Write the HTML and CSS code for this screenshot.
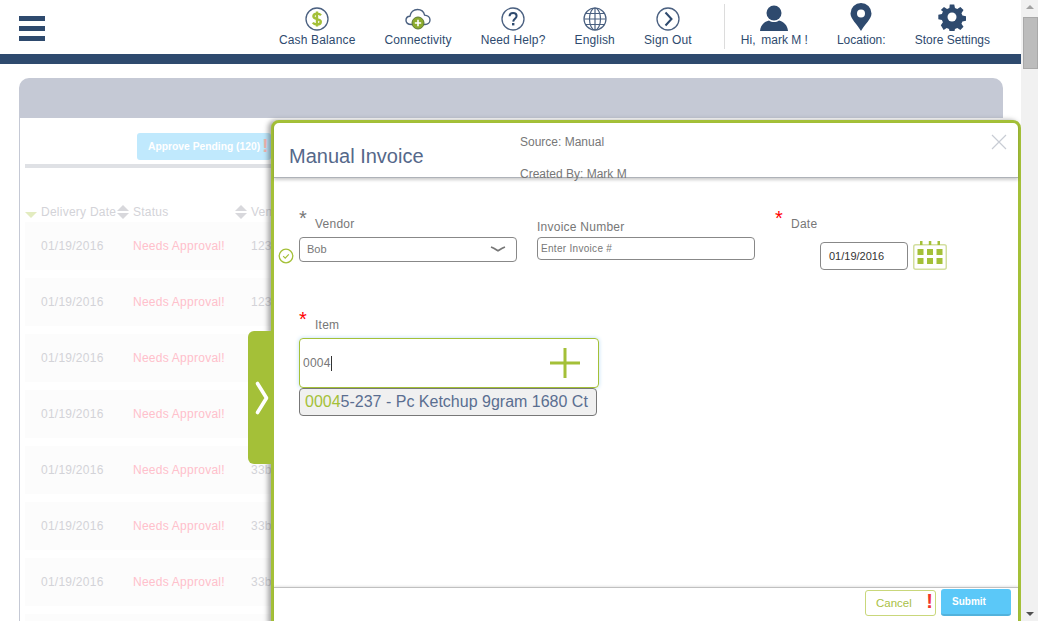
FILE: index.html
```html
<!DOCTYPE html>
<html>
<head>
    <meta charset="UTF-8">
    <title>Manual Invoice</title>
    <link rel="stylesheet" href="styles.css">
</head>
<body>
<div class="page">
    <div class="main">
        <div class="header">
            <div class="burger"><i></i><i></i><i></i></div>
            <div class="nav">
                <div class="nav-group">
                    <div class="nav-item">
                        <svg width="24" height="24" viewBox="0 0 24 24"><circle cx="12" cy="12" r="11" fill="#fff" stroke="#4a6080" stroke-width="1.3"/><path d="M16 8.2C15 7 13.6 6.6 12 6.6c-2 0-3.6 1-3.6 2.7 0 3.7 7.4 1.8 7.4 5.4 0 1.8-1.7 2.8-3.8 2.8-1.8 0-3.3-.6-4.2-1.9M12 4.500v15" fill="none" stroke="#a4c038" stroke-width="2.4"/></svg>
                        <span>Cash Balance</span>
                    </div>
                    <div class="nav-item">
                        <svg width="26" height="24" viewBox="0 0 26 24"><path d="M6.500 17.500C3 17.500 1 15.600 1 13.200c0-2.300 1.800-3.900 4-4C5.600 5.200 8.700 2.500 12.500 2.500c3.500 0 6.300 2.300 7.100 5.600 3 .2 5.400 2.200 5.400 4.900 0 2.500-2.200 4.500-5 4.500z" fill="#fff" stroke="#4a6080" stroke-width="1.400"/><circle cx="13" cy="16" r="6" fill="#8cab2e" stroke="#5b7a33"/><path d="M13 12.800v6.400M9.800 16h6.400" stroke="#fff" stroke-width="1.600"/></svg>
                        <span>Connectivity</span>
                    </div>
                    <div class="nav-item">
                        <svg width="24" height="24" viewBox="0 0 24 24"><circle cx="12" cy="12" r="11" fill="#fff" stroke="#4a6080" stroke-width="1.300"/><path d="M8.500 9.300C8.600 7.200 10 6 12.100 6c2.100 0 3.500 1.200 3.500 3 0 2.600-3.300 2.900-3.400 5.600" fill="none" stroke="#2e4a6e" stroke-width="2"/><rect x="11" y="16" width="2.400" height="2.400" fill="#2e4a6e"/></svg>
                        <span>Need Help?</span>
                    </div>
                    <div class="nav-item">
                        <svg width="24" height="24" viewBox="0 0 24 24" fill="none" stroke="#4a6080" stroke-width="1.200"><circle cx="12" cy="12" r="11"/><ellipse cx="12" cy="12" rx="5.500" ry="11"/><path d="M12 1v22M1 12h22M2.600 6.500h18.800M2.600 17.500h18.800"/></svg>
                        <span>English</span>
                    </div>
                    <div class="nav-item">
                        <svg width="24" height="24" viewBox="0 0 24 24" fill="none"><circle cx="12" cy="12" r="11" stroke="#4a6080" stroke-width="1.300"/><path d="M9.500 5.500L15.500 12l-6 6.500" stroke="#2e4a6e" stroke-width="2"/></svg>
                        <span>Sign Out</span>
                    </div>
                </div>
                <div class="nav-sep"></div>
                <div class="nav-group user">
                    <div class="nav-item">
                        <svg width="28" height="26" viewBox="0 0 28 26" fill="#2e4a6e"><circle cx="14" cy="8" r="7.500"/><path d="M0 26c.5-6 4.500-9.500 9-10.500 1.500 1 3 1.500 5 1.500s3.500-.5 5-1.500c4.500 1 8.500 4.500 9 10.500z"/></svg>
                        <span>Hi,&nbsp;&#8201;mark M !</span>
                    </div>
                    <div class="nav-item">
                        <svg width="22" height="28" viewBox="0 0 22 28"><path d="M11 28C7 21 .5 16 .5 10.500a10.500 10.500 0 0 1 21 0C21.500 16 15 21 11 28z" fill="#2e4a6e"/><circle cx="11" cy="10.500" r="4" fill="#fff"/></svg>
                        <span>Location:</span>
                    </div>
                    <div class="nav-item">
                        <svg width="28" height="28" viewBox="0 0 28 28"><path d="M11.500 0h5l.8 4 2.600 1.100 3.400-2.300 3.500 3.500-2.300 3.400 1.100 2.600 4 .8v5l-4 .8-1.100 2.600 2.300 3.400-3.500 3.500-3.400-2.300-2.600 1.100-.8 4h-5l-.8-4-2.600-1.100-3.400 2.300L1.600 23.200l2.300-3.400-1.100-2.600-4-.8v-5l4-.8 1.100-2.600L1.600 6.300l3.500-3.500 3.400 2.300 2.600-1.100z" fill="#2e4a6e" transform="translate(1.400 1.400) scale(.9)"/><circle cx="14" cy="14" r="4.500" fill="#fff"/></svg>
                        <span>Store Settings</span>
                    </div>
                </div>
            </div>
        </div>
        <div class="blue-bar"></div>

        <div class="content">
            <div class="panel">
                <div class="panel-head"></div>
                <div class="panel-body">
                    <div class="toolbar">
                        <div class="approve-btn">Approve Pending (120)<b>!</b></div>
                    </div>
                    <div class="toolbar-line"></div>
                    <div class="grid-head">
                        <div class="cell-date"><i class="sort-down"></i>Delivery Date<i class="sort-both"></i></div>
                        <div class="cell-status">Status<i class="sort-both"></i></div>
                        <div>Vendor</div>
                    </div>
                    <div class="grid-row"><div>01/19/2016</div><div class="needs">Needs Approval!</div><div>1234</div></div>
                    <div class="grid-row"><div>01/19/2016</div><div class="needs">Needs Approval!</div><div>1234</div></div>
                    <div class="grid-row"><div>01/19/2016</div><div class="needs">Needs Approval!</div><div>1234</div></div>
                    <div class="grid-row"><div>01/19/2016</div><div class="needs">Needs Approval!</div><div>1234</div></div>
                    <div class="grid-row"><div>01/19/2016</div><div class="needs">Needs Approval!</div><div>33b</div></div>
                    <div class="grid-row"><div>01/19/2016</div><div class="needs">Needs Approval!</div><div>33b</div></div>
                    <div class="grid-row"><div>01/19/2016</div><div class="needs">Needs Approval!</div><div>33b</div></div>
                    <div class="grid-row"></div>
                </div>
            </div>

            <div class="modal">
                <div class="modal-tab">
                    <svg width="14" height="34" viewBox="0 0 14 34" fill="none"><path d="M2.500 2.500l9 14.500-9 14.500" stroke="#fff" stroke-width="3.600" stroke-linecap="round" stroke-linejoin="round"/></svg>
                </div>
                <div class="modal-head">
                    <div class="modal-title">Manual Invoice</div>
                    <div class="modal-meta">
                        <div>Source: Manual</div>
                        <div>Created By: Mark M</div>
                    </div>
                    <svg class="modal-close" width="16" height="16" viewBox="0 0 16 16" fill="none"><path d="M1 1l14 14M15 1L1 15" stroke="#c8ccd4" stroke-width="1.200"/></svg>
                </div>
                <div class="modal-body">
                    <div class="form-top">
                        <div class="field">
                            <div class="field-label"><span class="star grey">*</span><span>Vendor</span></div>
                            <svg class="valid-icon" width="16" height="16" viewBox="0 0 16 16" fill="none"><circle cx="8" cy="8" r="6.800" stroke="#a4c038" stroke-width="1.300"/><path d="M5.200 8.200l2 2 3.600-3.800" stroke="#a4c038" stroke-width="1.200"/></svg>
                            <div class="select-box">Bob
                                <svg width="16" height="6" viewBox="0 0 16 6" fill="none"><path d="M1 1c3 1 5 2.500 7 3.800C10 3.500 12 2 15 1" stroke="#777" stroke-width="1.800"/></svg>
                            </div>
                        </div>
                        <div class="field invoice">
                            <div class="field-label"><span>Invoice Number</span></div>
                            <div class="text-box">Enter Invoice #</div>
                        </div>
                        <div class="field date">
                            <div class="field-label"><span class="star">*</span><span>Date</span></div>
                            <div class="date-line">
                                <div class="date-box">01/19/2016</div>
                                <svg width="34" height="29" viewBox="0 0 34 29"><rect x=".75" y="3.750" width="32.500" height="24.500" rx="2" fill="#fff" stroke="#d3dfa0" stroke-width="1.500"/><path d="M7 0h2.500v4H7zM15.800 0h2.500v4h-2.500zM24.500 0H27v4h-2.500zM4.500 8h6v6h-6zM14 8h6v6h-6zM23.500 8h6v6h-6zM4.500 17h6v6h-6zM14 17h6v6h-6zM23.500 17h6v6h-6z" fill="#a4c038"/></svg>
                            </div>
                        </div>
                    </div>
                    <div class="field item">
                        <div class="field-label"><span class="star">*</span><span>Item</span></div>
                        <div class="item-box">
                            <span class="item-text">0004</span><i class="caret"></i>
                            <svg width="30" height="30" viewBox="0 0 30 30"><path d="M15 0v30M0 15h30" stroke="#a4c038" stroke-width="3"/></svg>
                        </div>
                        <div class="suggest"><em>0004</em>5-237 - Pc Ketchup 9gram 1680 Ct</div>
                    </div>
                </div>
                <div class="modal-foot">
                    <div class="cancel-btn">Cancel<b>!</b></div>
                    <div class="submit-btn">Submit</div>
                </div>
            </div>
        </div>
    </div>

    <div class="scrollbar">
        <i class="arrow-up"></i>
        <div class="thumb"></div>
        <i class="arrow-down"></i>
    </div>
</div>
</body>
</html>
```
FILE: styles.css
```css
html,body{ margin: 0; padding: 0; height: 100%; overflow: hidden; background: #fff; font-family: "Liberation Sans", Arial, sans-serif; font-size: 12px; }

.page{ display: flex; height: 621px; overflow: hidden; }
.main{ width: 1021px; display: flex; flex-direction: column; }

/* top bar */
.header{ height: 54px; display: flex; justify-content: space-between; flex-shrink: 0; }
.burger{ display: flex; flex-direction: column; gap: 5px; width: 26px; margin: 16px 0 0 19px; }
.burger i{ display: block; height: 5px; background: #2e4a6e; }
.nav{ display: flex; padding-right: 31px; }
.nav-group{ display: flex; gap: 29px; letter-spacing: .15px; }
.nav-group.user{ letter-spacing: 0; }
.nav-item{ display: flex; flex-direction: column; align-items: center; justify-content: flex-end; height: 47px; color: #2e4a6e; white-space: nowrap; line-height: 14px; }
.nav-item svg{ margin-bottom: 2px; }
.nav-sep{ width: 1px; height: 45px; margin: 4px 16px 0 32px; background: #dcdcdc; }
.blue-bar{ height: 10px; background: #2e4a6e; flex-shrink: 0; }

/* faded list behind the dialog */
.content{ position: relative; flex: 1; padding: 14px 18px 0 19px; }
.panel{ height: 100%; display: flex; flex-direction: column; }
.panel-head{ height: 40px; flex-shrink: 0; background: #c5c9d5; border-radius: 10px 10px 0 0; }
.panel-body{ flex: 1; padding: 15px 0 0 5px; border-left: 1px solid #c5c9d5; color: #d3d3d8; letter-spacing: .25px; }
.toolbar{ padding-left: 112px; }
.approve-btn{ display: flex; align-items: center; height: 27px; width: 134px; padding-left: 11px; box-sizing: border-box; background: #c0e9fd; border-radius: 3px; color: #fff; font-size: 10.300px; font-weight: bold; letter-spacing: 0; white-space: nowrap; }
.approve-btn b{ margin-left: 2px; font-size: 18px; color: #f3b5ae; }
.toolbar-line{ height: 4px; margin-top: 4px; background: #dfe1e5; }
.grid-head,.grid-row{ display: grid; grid-template-columns: 108px 118px 1fr; }
.grid-head{ margin-top: 36px; height: 16px; line-height: 16px; }
.grid-head > div{ position: relative; display: flex; align-items: center; }
.cell-date{ padding-left: 16px; }
.sort-down{ position: absolute; left: 0; top: 8px; border: 6px solid transparent; border-top: 6px solid #e3ecc0; border-bottom: 0; }
.sort-both{ position: absolute; top: 1px; width: 12px; height: 14px; }
.sort-both:before,.sort-both:after{ content: ""; position: absolute; left: 0; border: 6px solid transparent; }
.sort-both:before{ top: 0; border-top: 0; border-bottom: 6px solid #d8d8dc; }
.sort-both:after{ bottom: 0; border-bottom: 0; border-top: 6px solid #d8d8dc; }
.cell-date .sort-both{ left: 92px; }
.cell-status .sort-both{ left: 102px; }
.grid-row{ height: 48px; align-items: center; margin-bottom: 8px; background: #fcfcfc; }
.grid-row > div:first-child{ padding-left: 16px; }
.grid-head + .grid-row{ margin-top: 2px; }
.needs{ color: #ffc0cb; }

/* dialog */
.modal{ position: absolute; left: 271px; top: 56px; width: 750px; height: 510px; box-sizing: border-box; display: flex; flex-direction: column; background: #fff; border: 3px solid #a4c038; border-radius: 8px; box-shadow: -3px 0 5px rgba(0,0,0,.35); color: #777; }
.modal-tab{ position: absolute; left: -26px; top: 208px; width: 26px; height: 133px; display: flex; align-items: center; justify-content: center; padding-left: 2px; box-sizing: border-box; background: #a4c038; border-radius: 6px 0 0 6px; }
.modal-head{ height: 54px; flex-shrink: 0; display: flex; border-bottom: 1px solid #aeb2b8; box-shadow: 0 2px 3px rgba(0,0,0,.2); }
.modal-title{ width: 246px; padding: 20px 0 0 15px; box-sizing: border-box; font-size: 20px; line-height: 26px; color: #55688a; }
.modal-meta{ flex: 1; display: flex; flex-direction: column; gap: 18px; padding-top: 12px; line-height: 14px; white-space: nowrap; }
.modal-close{ margin: 11px 11px 0 0; }
.modal-body{ flex: 1; padding: 0 25px; }
.form-top{ display: grid; grid-template-columns: 218px 218px 1fr; column-gap: 20px; height: 131px; padding-top: 30px; box-sizing: border-box; }
.field{ position: relative; }
.field-label{ display: flex; height: 29px; letter-spacing: .25px; }
.field-label span:last-child{ padding-top: 9px; }
.star{ width: 16px; font-size: 20px; line-height: 20px; color: #f00; }
.star.grey{ color: #777; }
.valid-icon{ position: absolute; left: -21px; top: 40px; }
.select-box{ height: 25px; display: flex; align-items: center; justify-content: space-between; padding: 0 10px 1px 7px; border: 1px solid #888; border-radius: 4px; box-sizing: border-box; font-size: 11px; }
.invoice .field-label span{ padding-top: 12px; }
.text-box{ height: 23px; line-height: 21px; padding-left: 3px; border: 1px solid #888; border-radius: 4px; box-sizing: border-box; font-size: 10px; letter-spacing: .3px; }
.date-line{ display: flex; align-items: center; gap: 5px; margin: 4px 0 0 45px; }
.date-box{ width: 88px; height: 28px; line-height: 26px; padding-left: 8px; border: 1px solid #888; border-radius: 4px; box-sizing: border-box; font-size: 11px; color: #333; }
.item{ width: 300px; }
.item-box{ height: 50px; display: flex; align-items: center; padding-left: 3px; border: 1px solid #a4c038; border-radius: 4px; box-sizing: border-box; box-shadow: 0 0 4px #b9dcf5; letter-spacing: .25px; }
.item-box svg{ margin-left: auto; margin-right: 18px; }
.caret{ width: 1px; height: 15px; background: #333; }
.suggest{ width: 298px; height: 28px; line-height: 25px; padding-left: 5px; box-sizing: border-box; background: #f0f0f0; border: 1px solid #777; border-radius: 4px; font-size: 16px; color: #5a6e90; white-space: nowrap; }
.suggest em{ font-style: normal; color: #a4c038; }
.modal-foot{ height: 40px; flex-shrink: 0; display: flex; justify-content: flex-end; align-items: flex-start; gap: 5px; padding: 1px 7px 0 0; border-top: 1px solid #c0c0c0; box-shadow: 0 -1px 2px rgba(0,0,0,.1); box-sizing: border-box; }
.cancel-btn{ position: relative; width: 71px; height: 26px; margin-top: 1px; line-height: 25px; padding-left: 10px; box-sizing: border-box; border: 1px solid #c9d77b; border-radius: 3px; color: #a9bf45; font-size: 11.500px; }
.cancel-btn b{ position: absolute; right: 2px; top: -2px; font-size: 20px; color: #f0342c; }
.submit-btn{ width: 70px; height: 27px; line-height: 26px; padding-left: 11px; box-sizing: border-box; background: #5bc8f8; border-bottom: 2px solid #52b2dc; border-radius: 3px; color: #fff; font-weight: bold; font-size: 10px; }

/* page scrollbar */
.scrollbar{ width: 17px; position: relative; flex-shrink: 0; background: #f1f1f1; }
.thumb{ position: absolute; left: 2px; top: 17px; width: 13px; height: 50px; background: #bcbcbc; border: 1px solid #a9a9a9; }
.arrow-up,.arrow-down{ position: absolute; left: 5px; border: 4px solid transparent; }
.arrow-up{ top: 5px; border-top: 0; border-bottom: 4px solid #a3a3a3; }
.arrow-down{ bottom: 5px; border-bottom: 0; border-top: 4px solid #505050; }
```
